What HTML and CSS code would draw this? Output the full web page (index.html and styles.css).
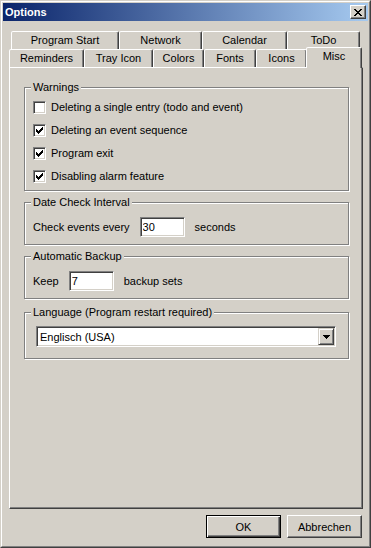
FILE: index.html
```html
<!DOCTYPE html>
<html lang="en">
<head>
  <meta charset="UTF-8" />
  <title>Options</title>
  <link rel="stylesheet" href="styles.css">
</head>
<body>
  <div class="window">
    <div class="frame">
      <div class="titlebar">
        <span class="title">Options</span>
        <button class="close-btn">
          <svg width="8" height="7" viewBox="0 0 8 7" shape-rendering="crispEdges"><path d="M0 0h2v1h-2z M6 0h2v1h-2z M1 1h2v1h-2z M5 1h2v1h-2z M2 2h4v1h-4z M3 3h2v1h-2z M2 4h4v1h-4z M1 5h2v1h-2z M5 5h2v1h-2z M0 6h2v1h-2z M6 6h2v1h-2z" fill="#000"/></svg>
        </button>
      </div>

      <div class="dialog">
        <div class="tabs">
          <div class="tab-row back">
            <div class="tab tab-start">Program Start</div>
            <div class="tab tab-network">Network</div>
            <div class="tab tab-calendar">Calendar</div>
            <div class="tab tab-todo">ToDo</div>
          </div>
          <div class="tab-row front">
            <div class="tab tab-reminders">Reminders</div>
            <div class="tab tab-tray">Tray Icon</div>
            <div class="tab tab-colors">Colors</div>
            <div class="tab tab-fonts">Fonts</div>
            <div class="tab tab-icons">Icons</div>
            <div class="tab tab-misc active">Misc</div>
          </div>
        </div>

        <div class="panel">
          <fieldset class="group warnings">
            <legend>Warnings</legend>
            <div class="check"><span class="box"></span>Deleting a single entry (todo and event)</div>
            <div class="check"><span class="box"><svg width="11" height="11" viewBox="0 0 11 11" shape-rendering="crispEdges"><path d="M2 4h1v3h-1z M3 5h1v3h-1z M4 6h1v3h-1z M5 5h1v3h-1z M6 4h1v3h-1z M7 3h1v3h-1z M8 2h1v3h-1z" fill="#000"/></svg></span>Deleting an event sequence</div>
            <div class="check"><span class="box"><svg width="11" height="11" viewBox="0 0 11 11" shape-rendering="crispEdges"><path d="M2 4h1v3h-1z M3 5h1v3h-1z M4 6h1v3h-1z M5 5h1v3h-1z M6 4h1v3h-1z M7 3h1v3h-1z M8 2h1v3h-1z" fill="#000"/></svg></span>Program exit</div>
            <div class="check"><span class="box"><svg width="11" height="11" viewBox="0 0 11 11" shape-rendering="crispEdges"><path d="M2 4h1v3h-1z M3 5h1v3h-1z M4 6h1v3h-1z M5 5h1v3h-1z M6 4h1v3h-1z M7 3h1v3h-1z M8 2h1v3h-1z" fill="#000"/></svg></span>Disabling alarm feature</div>
          </fieldset>

          <fieldset class="group interval">
            <legend>Date Check Interval</legend>
            <div class="field-row">
              <span>Check events every</span>
              <input class="edit" type="text" value="30">
              <span>seconds</span>
            </div>
          </fieldset>

          <fieldset class="group backup">
            <legend>Automatic Backup</legend>
            <div class="field-row">
              <span>Keep</span>
              <input class="edit" type="text" value="7">
              <span>backup sets</span>
            </div>
          </fieldset>

          <fieldset class="group language">
            <legend>Language (Program restart required)</legend>
            <div class="combo">
              <span class="combo-text">Englisch (USA)</span>
              <span class="combo-btn">
                <svg width="7" height="4" viewBox="0 0 7 4" shape-rendering="crispEdges"><path d="M0 0h7v1h-7z M1 1h5v1h-5z M2 2h3v1h-3z M3 3h1v1h-1z" fill="#000"/></svg>
              </span>
            </div>
          </fieldset>
        </div>

        <div class="buttons">
          <button class="btn default">OK</button>
          <button class="btn">Abbrechen</button>
        </div>
      </div>
    </div>
  </div>
</body>
</html>
```

FILE: styles.css
```css
body {
  margin: 0;
  font-family: "Liberation Sans", Arial, sans-serif;
  font-size: 11px;
  color: #000;
  background: #d4d0c8;
  overflow: hidden;
}
.window {
  width: 371px;
  height: 548px;
  box-sizing: border-box;
  border: 1px solid;
  border-color: #d4d0c8 #404040 #404040 #d4d0c8;
  background: #d4d0c8;
}
.frame {
  height: 100%;
  box-sizing: border-box;
  border: 1px solid;
  border-color: #fff #808080 #808080 #fff;
  padding: 1px;
  display: flex;
  flex-direction: column;
}
.titlebar {
  height: 18px;
  flex: none;
  display: flex;
  align-items: center;
  justify-content: space-between;
  padding: 0 2px 0 2px;
  background: linear-gradient(to right, #0a246a, #a6caf0);
  color: #fff;
  font-weight: bold;
}
.title {
  line-height: 18px;
}
.close-btn {
  width: 16px;
  height: 14px;
  box-sizing: border-box;
  padding: 0;
  border: 1px solid;
  border-color: #fff #404040 #404040 #fff;
  box-shadow: inset -1px -1px #808080;
  background: #d4d0c8;
  display: flex;
  align-items: center;
  justify-content: center;
}
.close-btn svg {
  display: block;
}
.dialog {
  flex: 1;
  display: flex;
  flex-direction: column;
  padding: 10px 5px 7px 6px;
}

/* tabs */
.tab-row {
  display: flex;
  height: 18px;
}
.tab-row.back {
  padding-left: 2px;
}
.tab {
  box-sizing: border-box;
  height: 18px;
  flex: none;
  border: 1px solid;
  border-bottom: none;
  border-color: #fff #404040 transparent #fff;
  border-radius: 2px 2px 0 0;
  box-shadow: inset -1px 0 #808080;
  background: #d4d0c8;
  text-align: center;
  line-height: 16px;
  white-space: nowrap;
}
.tab.active {
  height: 21px;
  margin: -2px 0 -1px -1px;
  position: relative;
  z-index: 1;
}
.tab-start { width: 108px; }
.tab-network { width: 83px; }
.tab-calendar { width: 85px; }
.tab-todo { width: 73px; }
.tab-reminders { width: 75px; }
.tab-tray { width: 69px; }
.tab-colors { width: 51px; }
.tab-fonts { width: 52px; }
.tab-icons { width: 51px; }
.tab-misc { width: 56px; }

.panel {
  flex: 1;
  border: 1px solid;
  border-color: #fff #404040 #404040 #fff;
  box-shadow: inset -1px -1px #808080;
  padding: 13px 13px 0 14px;
}

/* group boxes */
.group {
  margin: 0 0 5px;
  padding: 7px 8px 7px;
  border: 1px solid #808080;
  box-shadow: inset 1px 1px #fff, 1px 1px #fff;
  min-width: 0;
}
.group legend {
  padding: 0 2px;
  margin-left: -2px;
  line-height: 13px;
  background: #d4d0c8;
}
.check {
  display: flex;
  align-items: center;
  gap: 5px;
  height: 13px;
  line-height: 13px;
  margin-bottom: 10px;
}
.check:last-child {
  margin-bottom: 0;
}
.box {
  width: 13px;
  height: 13px;
  flex: none;
  box-sizing: border-box;
  border: 1px solid;
  border-color: #808080 #fff #fff #808080;
  box-shadow: inset 1px 1px #404040, inset -1px -1px #d4d0c8;
  background: #fff;
}
.box svg {
  display: block;
}
.interval,
.backup {
  padding-top: 8px;
}
.backup {
  margin-bottom: 7px;
}
.field-row {
  display: flex;
  align-items: center;
}
.edit {
  width: 45px;
  height: 20px;
  box-sizing: border-box;
  margin: 0 10px;
  padding: 0 2px;
  border: 1px solid;
  border-color: #808080 #fff #fff #808080;
  box-shadow: inset 1px 1px #404040, inset -1px -1px #d4d0c8;
  background: #fff;
  font: inherit;
  color: #000;
  outline: none;
}
.language {
  padding-bottom: 11px;
}
.combo {
  margin-left: 3px;
  width: 300px;
  height: 21px;
  box-sizing: border-box;
  border: 1px solid;
  border-color: #808080 #fff #fff #808080;
  box-shadow: inset 1px 1px #404040, inset -1px -1px #d4d0c8;
  background: #fff;
  display: flex;
  align-items: center;
  justify-content: space-between;
  padding: 1px 1px 1px 3px;
}
.combo-btn {
  width: 16px;
  height: 17px;
  box-sizing: border-box;
  border: 1px solid;
  border-color: #d4d0c8 #404040 #404040 #d4d0c8;
  box-shadow: inset 1px 1px #fff, inset -1px -1px #808080;
  background: #d4d0c8;
  display: flex;
  align-items: center;
  justify-content: center;
}
.combo-btn svg {
  display: block;
}

/* dialog buttons */
.buttons {
  display: flex;
  justify-content: flex-end;
  gap: 6px;
  margin-top: 6px;
  padding-right: 1px;
}
.btn {
  width: 75px;
  height: 23px;
  box-sizing: border-box;
  padding: 0;
  border: 1px solid;
  border-color: #fff #404040 #404040 #fff;
  box-shadow: inset -1px -1px #808080;
  background: #d4d0c8;
  font: inherit;
  color: #000;
}
.btn.default {
  border-color: #000;
  box-shadow: inset 1px 1px #fff, inset -1px -1px #404040, inset -2px -2px #808080;
}
```
